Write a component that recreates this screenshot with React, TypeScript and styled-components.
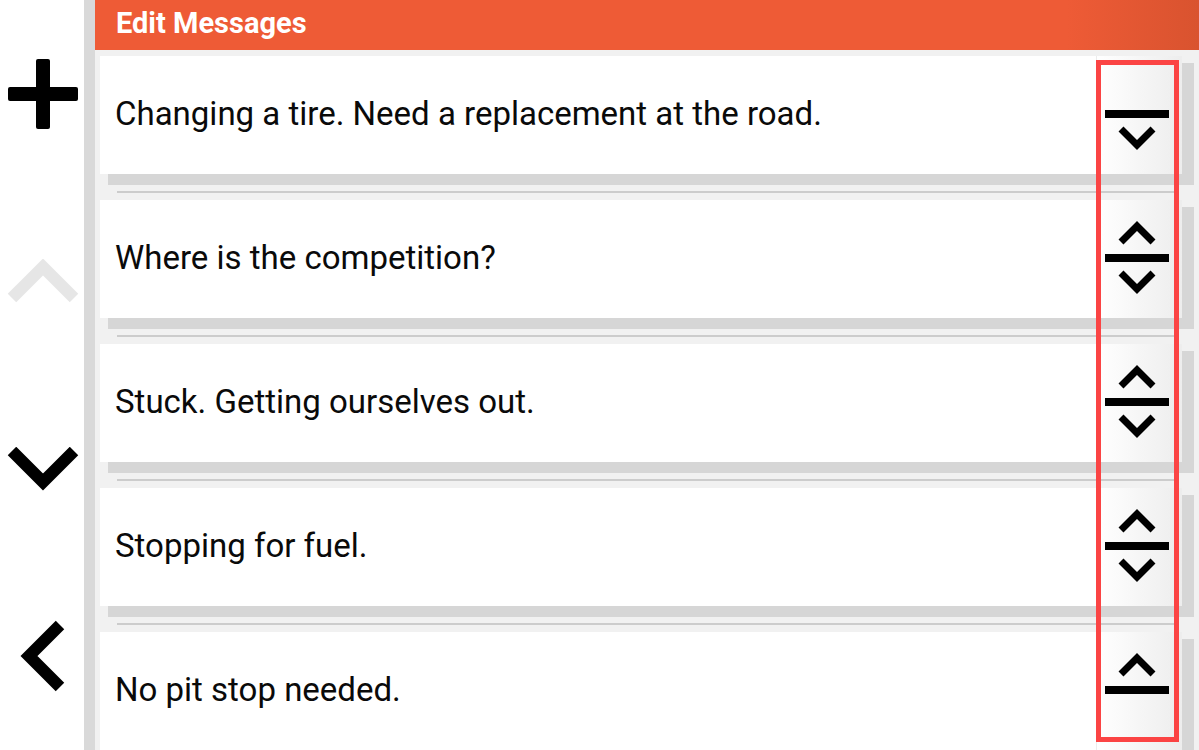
import styled, { createGlobalStyle } from "styled-components";
import { FC } from "react";

const GlobalStyle = createGlobalStyle`
	html, body {
		margin: 0;
		padding: 0;
		background: #ffffff;
		font-family: Roboto, "Liberation Sans", sans-serif;
	}
`;

const StyledPage = styled.div`
	position: relative;
	display: flex;
	flex-direction: row;
	width: 1199px;
	height: 750px;
	overflow: hidden;
`;

const StyledRail = styled.div`
	display: flex;
	flex-direction: column;
	width: 84px;
	flex-shrink: 0;
	background-color: #ffffff;
`;

const StyledRailButton = styled.div`
	flex: 1;
	display: flex;
	align-items: center;
	justify-content: center;
	padding-left: 1px;
`;

const StyledRailEdge = styled.div`
	width: 11px;
	flex-shrink: 0;
	background-color: #d9d9d9;
`;

const StyledMain = styled.div`
	flex: 1;
	display: flex;
	flex-direction: column;
	min-height: 0;
	overflow: hidden;
	background-color: #f1f1f1;
`;

const StyledHeader = styled.div`
	display: flex;
	align-items: center;
	flex-shrink: 0;
	height: 50px;
	padding: 0 0 4px 21px;
	box-sizing: border-box;
	background: linear-gradient(90deg, #ee5b36 0%, #ee5b36 88%, #d9532f 100%);
	color: #ffffff;
	font-size: 29px;
	font-weight: 700;
`;

const StyledList = styled.div`
	display: flex;
	flex-direction: column;
	flex-shrink: 0;
	padding: 6px 17px 0 5px;
`;

const StyledCard = styled.div`
	display: flex;
	flex-direction: row;
	height: 118px;
	background-color: #ffffff;
	box-shadow: 10px 9px 0 2px #d6d6d6;
`;

const StyledText = styled.div`
	flex: 1;
	display: flex;
	align-items: center;
	padding-left: 15px;
	padding-bottom: 4px;
	font-size: 33px;
	color: #0a0a0a;
`;

const StyledMoveButton = styled.div`
	display: flex;
	align-items: center;
	justify-content: center;
	width: 86px;
	border-left: 1px solid #ececec;
	background: linear-gradient(90deg, #ffffff 0%, #ededed 100%);
	padding-right: 6px;
	padding-bottom: 2px;
	box-sizing: border-box;
`;

const StyledGap = styled.div`
	height: 26px;
	padding: 17px 4px 0 17px;
	box-sizing: border-box;
`;

const StyledRule = styled.div`
	height: 2px;
	background-color: #cccccc;
`;

const StyledHighlight = styled.div`
	position: absolute;
	top: 60px;
	right: 20px;
	width: 83px;
	height: 682px;
	border: 5px solid #fb4444;
	box-sizing: border-box;
	pointer-events: none;
`;

const PlusIcon = () => (
	<svg width="70" height="70" viewBox="0 0 70 70">
		<rect x="28" y="0" width="14" height="70" rx="2" fill="#000" />
		<rect x="0" y="28" width="70" height="14" rx="2" fill="#000" />
	</svg>
);

const ChevronIcon: FC<{ dir: "up" | "down" | "left"; color: string }> = ({
	dir,
	color,
}) => {
	if (dir === "left") {
		return (
			<svg width="46" height="72" viewBox="0 0 46 72">
				<path
					d="M40 5 L9 36 L40 67"
					fill="none"
					stroke={color}
					strokeWidth="12"
					strokeLinejoin="miter"
				/>
			</svg>
		);
	}
	const d = dir === "up" ? "M5 39 L36 8 L67 39" : "M5 4 L36 35 L67 4";
	return (
		<svg width="72" height="44" viewBox="0 0 72 44">
			<path
				d={d}
				fill="none"
				stroke={color}
				strokeWidth="12"
				strokeLinejoin="miter"
			/>
		</svg>
	);
};

const MoveIcon: FC<{ up: boolean; down: boolean }> = ({ up, down }) => (
	<svg width="64" height="74" viewBox="0 0 64 74">
		{up && (
			<path
				d="M16 21 L32 5 L48 21"
				fill="none"
				stroke="#000"
				strokeWidth="7"
				strokeLinejoin="miter"
			/>
		)}
		<rect x="0" y="33" width="64" height="8" fill="#000" />
		{down && (
			<path
				d="M16 52 L32 68 L48 52"
				fill="none"
				stroke="#000"
				strokeWidth="7"
				strokeLinejoin="miter"
			/>
		)}
	</svg>
);

const messages = [
	"Changing a tire. Need a replacement at the road.",
	"Where is the competition?",
	"Stuck. Getting ourselves out.",
	"Stopping for fuel.",
	"No pit stop needed.",
];

export default function App() {
	return (
		<>
			<GlobalStyle />
			<StyledPage>
				<StyledRail>
					<StyledRailButton>
						<PlusIcon />
					</StyledRailButton>
					<StyledRailButton>
						<ChevronIcon dir="up" color="#e6e6e6" />
					</StyledRailButton>
					<StyledRailButton>
						<ChevronIcon dir="down" color="#000" />
					</StyledRailButton>
					<StyledRailButton>
						<ChevronIcon dir="left" color="#000" />
					</StyledRailButton>
				</StyledRail>
				<StyledRailEdge />
				<StyledMain>
					<StyledHeader>Edit Messages</StyledHeader>
					<StyledList>
						{messages.map((msg, i) => (
							<div key={msg}>
								<StyledCard>
									<StyledText>{msg}</StyledText>
									<StyledMoveButton>
										<MoveIcon up={i > 0} down={i < messages.length - 1} />
									</StyledMoveButton>
								</StyledCard>
								<StyledGap>
									<StyledRule />
								</StyledGap>
							</div>
						))}
					</StyledList>
				</StyledMain>
				<StyledHighlight />
			</StyledPage>
		</>
	);
}
